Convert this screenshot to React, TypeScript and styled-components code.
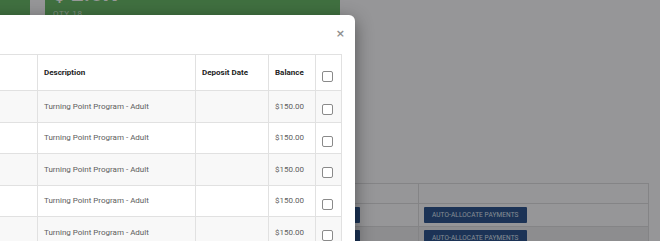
import React from "react";
import styled, { createGlobalStyle } from "styled-components";

const GlobalStyle = createGlobalStyle`
  html, body {
    margin: 0;
    padding: 0;
    font-family: Roboto, "Liberation Sans", sans-serif;
  }
`;

const Page = styled.div`
  position: relative;
  width: 660px;
  height: 241px;
  overflow: hidden;
  background: #fbfbfd;
`;

const CardsRow = styled.div`
  display: flex;
  gap: 15px;
  margin: -45px 0 0 -265px;
`;

const StatCard = styled.div`
  width: 295px;
  height: 60px;
  box-sizing: border-box;
  padding: 29px 0 0 8px;
  background: #6bbb6c;
  color: #fff;
`;

const Amount = styled.div`
  font-size: 22px;
  font-weight: 700;
  line-height: 20px;
`;

const Qty = styled.div`
  font-size: 8px;
  letter-spacing: 0.6px;
  opacity: 0.7;
  margin-top: 5px;
`;

const BgTable = styled.table`
  margin: 168px 0 0 20px;
  width: 629px;
  table-layout: fixed;
  border-collapse: collapse;
  font-size: 6.5px;
`;

const BgCell = styled.td<{ $w?: number }>`
  border: 1px solid #dcdcdf;
  padding: 0 5px;
  box-sizing: border-box;
  width: ${p => (p.$w ? `${p.$w}px` : "auto")};
`;

const BgRow = styled.tr<{ $h: number; $shade?: boolean }>`
  height: ${p => p.$h}px;
  background: ${p => (p.$shade ? "#ebebee" : "transparent")};
`;

const NavyButton = styled.span`
  display: inline-block;
  background: #2f5590;
  color: #dfe6f2;
  font-size: 6.5px;
  letter-spacing: 0.1px;
  padding: 4px 8px;
  border-radius: 1px;
  white-space: nowrap;
`;

const Overlay = styled.div`
  position: absolute;
  inset: 0;
  background: rgba(0, 0, 0, 0.4);
`;

const Modal = styled.div`
  position: absolute;
  top: 15px;
  left: -145px;
  width: 500px;
  height: 260px;
  box-sizing: border-box;
  background: #fff;
  border-radius: 6px;
  box-shadow: 0 5px 18px rgba(0, 0, 0, 0.45);
  padding: 0 13px;
`;

const ModalHeader = styled.div`
  display: flex;
  justify-content: flex-end;
  align-items: center;
  height: 39px;
`;

const Close = styled.button`
  border: 0;
  background: none;
  padding: 0 0 3px 0;
  margin-right: -3px;
  color: #8e8e8e;
  font-size: 11px;
  font-weight: 700;
  font-family: "DejaVu Sans", sans-serif;
  line-height: 1;
  cursor: pointer;
`;

const Table = styled.table`
  width: 100%;
  table-layout: fixed;
  border-collapse: collapse;
  font-size: 8px;
  color: #5e5e5e;
`;

const Th = styled.th<{ $w?: number }>`
  border: 1px solid #e1e1e1;
  height: 36px;
  padding: 0 6px;
  box-sizing: border-box;
  text-align: left;
  font-weight: 700;
  color: #222;
  width: ${p => (p.$w ? `${p.$w}px` : "auto")};
`;

const Row = styled.tr<{ $striped: boolean }>`
  height: 31.5px;
  background: ${p => (p.$striped ? "#f8f8f8" : "#fff")};
`;

const Td = styled.td`
  border: 1px solid #e1e1e1;
  padding: 0 6px;
  vertical-align: middle;
`;

const Box = styled.input.attrs({ type: "checkbox" })`
  appearance: none;
  display: block;
  width: 11px;
  height: 11px;
  margin: 7px 0 0 0;
  border: 1px solid #8a8a8a;
  border-radius: 2px;
  background: #fff;
`;

const rows = [0, 1, 2, 3, 4];

export default function App() {
  return (
    <>
      <GlobalStyle />
      <Page>
        <CardsRow>
          <StatCard />
          <StatCard>
            <Amount>$ 2.6K</Amount>
            <Qty>QTY 18</Qty>
          </StatCard>
        </CardsRow>
        <BgTable>
          <tbody>
            <BgRow $h={20}>
              <BgCell />
              <BgCell $w={167} />
              <BgCell $w={230} />
            </BgRow>
            {[false, true].map(shade => (
              <BgRow key={String(shade)} $h={23} $shade={shade}>
                <BgCell />
                <BgCell $w={167}>
                  <NavyButton>AUTO-ALLOCATE PAYMENTS</NavyButton>
                </BgCell>
                <BgCell $w={230}>
                  <NavyButton>AUTO-ALLOCATE PAYMENTS</NavyButton>
                </BgCell>
              </BgRow>
            ))}
          </tbody>
        </BgTable>
        <Overlay />
        <Modal>
          <ModalHeader>
            <Close aria-label="Close">×</Close>
          </ModalHeader>
          <Table>
            <thead>
              <tr>
                <Th />
                <Th $w={158}>Description</Th>
                <Th $w={73}>Deposit Date</Th>
                <Th $w={47}>Balance</Th>
                <Th $w={26}>
                  <Box />
                </Th>
              </tr>
            </thead>
            <tbody>
              {rows.map(i => (
                <Row key={i} $striped={i % 2 === 0}>
                  <Td />
                  <Td>Turning Point Program - Adult</Td>
                  <Td />
                  <Td>$150.00</Td>
                  <Td>
                    <Box />
                  </Td>
                </Row>
              ))}
            </tbody>
          </Table>
        </Modal>
      </Page>
    </>
  );
}
